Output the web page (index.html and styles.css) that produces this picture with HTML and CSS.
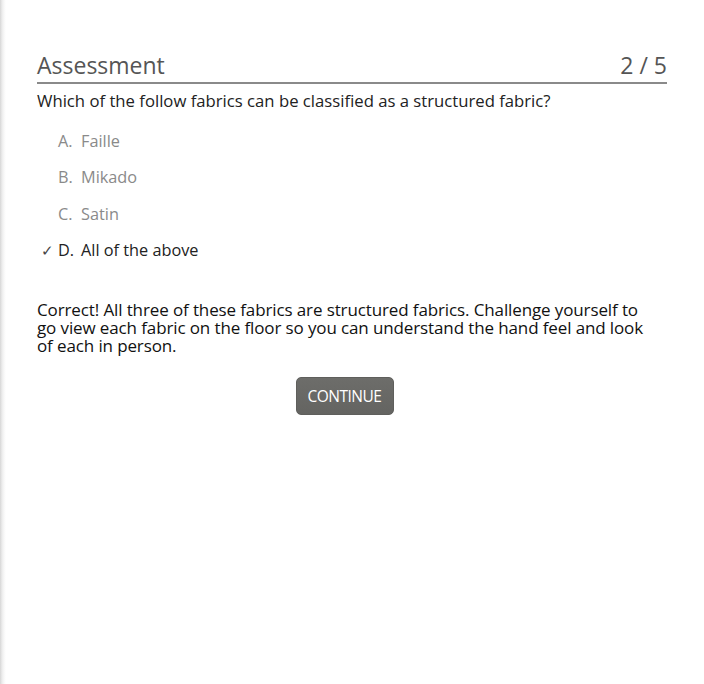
FILE: index.html
```html
<!DOCTYPE html>
<html>
<head>
<meta charset="utf-8">
<link rel="stylesheet" href="styles.css">
</head>
<body>
<div class="page">
  <div class="quiz">
    <div class="header">
      <h1 class="title">Assessment</h1>
      <span class="count">2 / 5</span>
    </div>
    <p class="question">Which of the follow fabrics can be classified as a structured fabric?</p>
    <ul class="options">
      <li class="option"><span class="mark"></span><span class="letter">A.</span>Faille</li>
      <li class="option"><span class="mark"></span><span class="letter">B.</span>Mikado</li>
      <li class="option"><span class="mark"></span><span class="letter">C.</span>Satin</li>
      <li class="option selected"><span class="mark">✓</span><span class="letter">D.</span>All of the above</li>
    </ul>
    <p class="feedback">Correct! All three of these fabrics are structured fabrics. Challenge yourself to go view each fabric on the floor so you can understand the hand feel and look of each in person.</p>
    <div class="actions">
      <button class="continue">CONTINUE</button>
    </div>
  </div>
</div>
</body>
</html>
```

FILE: styles.css
```css
html, body {
  margin: 0;
  padding: 0;
  background: #fff;
}
body {
  font-family: "Open Sans", "Noto Sans", sans-serif;
  color: #222;
  width: 704px;
  height: 684px;
  overflow: hidden;
}
.page {
  height: 684px;
  background: linear-gradient(to right, #d6d6d6 0px, #ececec 2px, #f8f8f8 4px, #fff 6px);
  padding: 50px 37px 0 37px;
  box-sizing: border-box;
}
.quiz {
  width: 630px;
}
.header {
  display: flex;
  justify-content: space-between;
  align-items: flex-end;
  border-bottom: 2px solid #8a8a8a;
  padding-bottom: 2px;
}
.title {
  margin: 0;
  font-weight: 400;
  font-size: 23px;
  line-height: 30px;
  color: #555;
}
.count {
  font-size: 23px;
  line-height: 30px;
  color: #555;
}
.question {
  margin: 6px 0 0 0;
  font-size: 16.7px;
  line-height: 22px;
  color: #222;
}
.options {
  list-style: none;
  margin: 18px 0 0 0;
  padding: 0;
}
.option {
  display: flex;
  align-items: baseline;
  font-size: 16.3px;
  line-height: 22px;
  height: 36.3px;
  color: #8a8a8a;
}
.mark {
  width: 21px;
  font-size: 15px;
  padding-left: 4px;
  box-sizing: border-box;
  font-family: "DejaVu Sans", sans-serif;
  font-weight: 300;
  color: #444;
}
.letter {
  width: 23px;
}
.option.selected {
  color: #222;
}
.feedback {
  margin: 26px 0 0 0;
  width: 612px;
  font-size: 17px;
  line-height: 18px;
  color: #111;
  letter-spacing: -0.12px;
}
.actions {
  display: flex;
  justify-content: center;
  margin-top: 22px;
}
.continue {
  width: 98px;
  height: 38px;
  border: 1px solid #5f5f5c;
  border-radius: 5px;
  background: linear-gradient(to bottom, #6d6d6a, #646461);
  color: #fff;
  font-family: "Open Sans", sans-serif;
  font-size: 15.5px;
  letter-spacing: -0.5px;
  padding: 0;
  margin-left: -15px;
}
```
